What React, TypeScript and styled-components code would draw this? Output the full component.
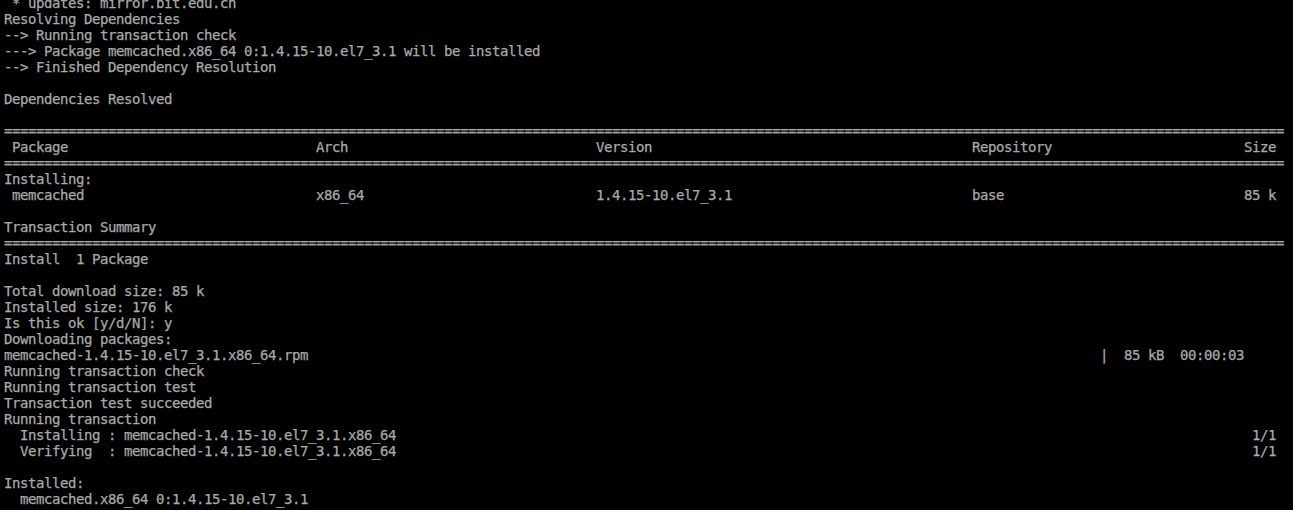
import React from "react";
import styled, { createGlobalStyle } from "styled-components";

const Global = createGlobalStyle`
  html, body {
    margin: 0;
    padding: 0;
    background: #000000;
  }
`;

const Screen = styled.div`
  width: 1293px;
  height: 510px;
  overflow: hidden;
  background: #000000;
  padding-left: 4px;
  box-sizing: border-box;
`;

const Lines = styled.div`
  display: flex;
  flex-direction: column;
  margin-top: -5px;
`;

const Line = styled.div`
  height: 16px;
  line-height: 16px;
  white-space: pre;
  font-family: "DejaVu Sans Mono", "Liberation Mono", monospace;
  font-size: 14px;
  letter-spacing: -0.428px;
  color: #aaaaaa;
  -webkit-text-stroke: 0.25px #aaaaaa;
`;

const rule = "=".repeat(160);

const tableRow = (a: string, b: string, c: string, d: string, e: string) =>
  a.padEnd(39) + b.padEnd(35) + c.padEnd(47) + d.padEnd(34) + e;

const lines: string[] = [
  " * updates: mirror.bit.edu.cn",
  "Resolving Dependencies",
  "--> Running transaction check",
  "---> Package memcached.x86_64 0:1.4.15-10.el7_3.1 will be installed",
  "--> Finished Dependency Resolution",
  "",
  "Dependencies Resolved",
  "",
  rule,
  tableRow(" Package", "Arch", "Version", "Repository", "Size"),
  rule,
  "Installing:",
  tableRow(" memcached", "x86_64", "1.4.15-10.el7_3.1", "base", "85 k"),
  "",
  "Transaction Summary",
  rule,
  "Install  1 Package",
  "",
  "Total download size: 85 k",
  "Installed size: 176 k",
  "Is this ok [y/d/N]: y",
  "Downloading packages:",
  "memcached-1.4.15-10.el7_3.1.x86_64.rpm".padEnd(137) + "|  85 kB  00:00:03",
  "Running transaction check",
  "Running transaction test",
  "Transaction test succeeded",
  "Running transaction",
  "  Installing : memcached-1.4.15-10.el7_3.1.x86_64".padEnd(156) + "1/1",
  "  Verifying  : memcached-1.4.15-10.el7_3.1.x86_64".padEnd(156) + "1/1",
  "",
  "Installed:",
  "  memcached.x86_64 0:1.4.15-10.el7_3.1",
];

export default function App() {
  return (
    <>
      <Global />
      <Screen>
        <Lines>
          {lines.map((l, i) => (
            <Line key={i}>{l || " "}</Line>
          ))}
        </Lines>
      </Screen>
    </>
  );
}
